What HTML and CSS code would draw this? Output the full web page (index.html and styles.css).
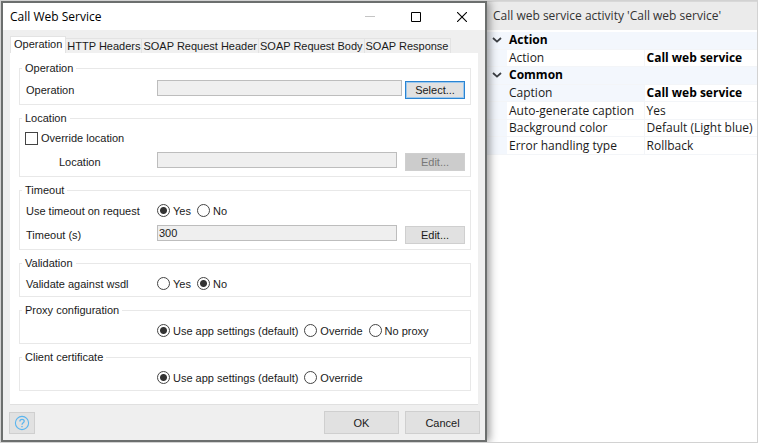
FILE: index.html
```html
<!DOCTYPE html>
<html lang="en">
<head>
<meta charset="utf-8">
<title>Call Web Service</title>
<link rel="stylesheet" href="styles.css">
</head>
<body>
<main class="dialog">
  <header class="titlebar">
    <h1 class="title">Call Web Service</h1>
    <button class="winbtn" aria-label="Minimize" disabled><svg width="10" height="10" viewBox="0 0 10 10"><path d="M0 4.5H10" stroke="#c4c4c4"/></svg></button>
    <button class="winbtn" aria-label="Maximize"><svg width="10" height="10" viewBox="0 0 10 10"><path d="M.5 .5H9.5V9.5H.5Z" fill="none" stroke="#000"/></svg></button>
    <button class="winbtn" aria-label="Close"><svg width="10" height="10" viewBox="0 0 10 10"><path d="M0 0L10 10M10 0L0 10" stroke="#000" stroke-width="1.1"/></svg></button>
  </header>
  <div class="client">
    <div class="tabs" role="tablist">
      <button class="tab active" role="tab" aria-selected="true">Operation</button>
      <button class="tab" role="tab">HTTP Headers</button>
      <button class="tab" role="tab">SOAP Request Header</button>
      <button class="tab" role="tab">SOAP Request Body</button>
      <button class="tab" role="tab">SOAP Response</button>
    </div>
    <form class="panel">
      <fieldset class="group">
        <legend>Operation</legend>
        <div class="row tight">
          <label for="operation">Operation</label>
          <input class="field" id="operation" type="text" readonly>
          <button class="btn focused" type="button">Select...</button>
        </div>
      </fieldset>
      <fieldset class="group">
        <legend>Location</legend>
        <label class="choices compact"><input type="checkbox">Override location</label>
        <div class="row">
          <label class="indent" for="location">Location</label>
          <input class="field" id="location" type="text" disabled>
          <button class="btn" type="button" disabled>Edit...</button>
        </div>
      </fieldset>
      <fieldset class="group">
        <legend>Timeout</legend>
        <div class="choices">
          <span class="name">Use timeout on request</span>
          <label><input type="radio" name="timeout" checked>Yes</label>
          <label><input type="radio" name="timeout">No</label>
        </div>
        <div class="row">
          <label for="seconds">Timeout (s)</label>
          <input class="field" id="seconds" type="text" value="300" readonly>
          <button class="btn" type="button">Edit...</button>
        </div>
      </fieldset>
      <fieldset class="group">
        <legend>Validation</legend>
        <div class="choices">
          <span class="name">Validate against wsdl</span>
          <label><input type="radio" name="validate">Yes</label>
          <label><input type="radio" name="validate" checked>No</label>
        </div>
      </fieldset>
      <fieldset class="group">
        <legend>Proxy configuration</legend>
        <div class="choices">
          <span class="name"></span>
          <label><input type="radio" name="proxy" checked>Use app settings (default)</label>
          <label><input type="radio" name="proxy">Override</label>
          <label><input type="radio" name="proxy">No proxy</label>
        </div>
      </fieldset>
      <fieldset class="group">
        <legend>Client certificate</legend>
        <div class="choices">
          <span class="name"></span>
          <label><input type="radio" name="cert" checked>Use app settings (default)</label>
          <label><input type="radio" name="cert">Override</label>
        </div>
      </fieldset>
    </form>
    <footer class="footer">
      <button class="btn help" aria-label="Help"><svg width="16" height="16" viewBox="0 0 16 16" fill="none" stroke="#5bb5ee"><circle cx="8" cy="8" r="6.6" stroke-width="1.1"/><path d="M5.9 6.4C5.9 3.6 10.2 3.7 10.2 6.2C10.2 7.8 8 7.8 8 9.7" stroke-width="1.3"/><path d="M8 10.9V12.3" stroke-width="1.4"/></svg></button>
      <button class="btn large">OK</button>
      <button class="btn large">Cancel</button>
    </footer>
  </div>
</main>
<aside class="props">
  <h2 class="props-title">Call web service activity 'Call web service'</h2>
  <table class="grid">
    <colgroup><col class="gutter"><col class="names"><col></colgroup>
    <tr class="cat"><td><svg width="10" height="6" viewBox="0 0 10 6"><path d="M1 1L5 4.6L9 1" fill="none" stroke="#3c3f44" stroke-width="1.8"/></svg></td><th colspan="2">Action</th></tr>
    <tr><td></td><td>Action</td><td class="changed">Call web service</td></tr>
    <tr class="cat"><td><svg width="10" height="6" viewBox="0 0 10 6"><path d="M1 1L5 4.6L9 1" fill="none" stroke="#3c3f44" stroke-width="1.8"/></svg></td><th colspan="2">Common</th></tr>
    <tr class="selected"><td></td><td>Caption</td><td class="changed">Call web service</td></tr>
    <tr><td></td><td>Auto-generate caption</td><td>Yes</td></tr>
    <tr><td></td><td>Background color</td><td>Default (Light blue)</td></tr>
    <tr><td></td><td>Error handling type</td><td>Rollback</td></tr>
  </table>
</aside>
</body>
</html>
```
FILE: styles.css
```css
* { box-sizing: border-box; }

body {
  margin: 0;
  min-height: 100vh;
  display: grid;
  grid-template-columns: minmax(0, 9fr) minmax(0, 5fr);
  border: 1px solid #d2d2d2;
  background: #fff;
  color: #1a1a1a;
  font: 11px/14px "Liberation Sans", Arial, sans-serif;
}

button, input { font: inherit; color: inherit; margin: 0; padding: 0; }

/* dialog window */
.dialog {
  display: flex;
  flex-direction: column;
  border: 2px solid #6c6f6e;
  box-shadow: 2px 0 9px rgba(0, 0, 0, 0.45);
  background: #efefef;
  z-index: 1;
}
.titlebar {
  display: flex;
  height: 27px;
  padding-left: 7px;
  align-items: center;
  background: #fff;
}
.title {
  flex: 1;
  margin: 0;
  font: 12px/16px "Open Sans", "Noto Sans", sans-serif;
  color: #000;
}
.winbtn {
  display: flex;
  width: 46px;
  height: 26px;
  align-items: center;
  justify-content: center;
  border: 0;
  background: none;
}

.client {
  flex: 1;
  display: flex;
  flex-direction: column;
  padding: 6px 7px;
}
.tabs { display: flex; align-items: flex-end; }
.tab {
  height: 15px;
  padding: 0 1px;
  border: 1px solid #e3e3e3;
  border-width: 1px 1px 0 0;
  background: #f0f0f0;
  white-space: nowrap;
}
.tab.active {
  height: 17px;
  padding: 0 3px 2px;
  border-left-width: 1px;
  background: #fff;
}
.panel {
  flex: 1;
  display: flex;
  flex-direction: column;
  gap: 6px;
  padding: 8px 7px 8px 9px;
  background: #fff;
  border-bottom: 1px solid #e0e0e0;
}

.group {
  min-width: 0;
  margin: 0;
  padding: 5px 5px 4px;
  border: 1px solid #e8e8e8;
}
.group legend { margin-left: -3px; padding: 0 3px; }
.row {
  display: grid;
  grid-template-columns: 132px 1fr 60px;
  height: 20px;
  align-items: center;
}
.choices + .row { margin-top: 6px; }
.row label, .name { padding-left: 1px; }
.row .indent { padding-left: 34px; }
.field {
  align-self: start;
  height: 16px;
  min-width: 0;
  margin-right: 8px;
  padding: 0 1px;
  border: 1px solid #bdbdbd;
  border-radius: 0;
  background: #efefef;
}
.tight .field { margin-right: 3px; }

.choices { display: flex; height: 17px; align-items: center; gap: 6px; }
.choices.compact { height: 16px; gap: 0; }
.name { flex: 0 0 126px; }
.choices label { display: flex; align-items: center; white-space: nowrap; }
input[type="radio"], input[type="checkbox"] {
  appearance: none;
  flex: none;
  width: 13px;
  height: 13px;
  margin-right: 3px;
  border: 1px solid #444;
  background: #fff;
}
input[type="radio"] { border-radius: 50%; }
input[type="radio"]:checked {
  background: radial-gradient(circle, #333 3px, #fff 4px);
}

.btn {
  height: 18px;
  border: 1px solid #cfcfcf;
  border-radius: 0;
  background: #e1e1e1;
  text-align: center;
}
.btn:disabled { background: #ccc; color: #777; }
.btn.focused { border-color: #2a84d2; box-shadow: inset 0 0 0 1px #9cc8ee; }

.footer {
  display: flex;
  gap: 6px;
  align-items: center;
  margin: 6px -2px 0 -1px;
}
.btn.large { width: 75px; height: 23px; }
.btn.help {
  display: flex;
  width: 26px;
  height: 22px;
  margin-right: auto;
  align-items: center;
  justify-content: center;
}

/* property grid */
.props {
  border-top: 1px solid #d8d8d8;
  font: 12px/16px "Open Sans", "Noto Sans", sans-serif;
}
.props-title {
  margin: 0;
  padding: 6px;
  background: #ebebeb;
  font: inherit;
  color: #333;
  white-space: nowrap;
}
.grid {
  width: 100%;
  height: 123px;
  table-layout: fixed;
  border-collapse: collapse;
  margin-top: 2px;
}
.gutter { width: 20px; }
.names { width: 137px; }
.grid td, .grid th {
  padding: 0 0 0 2px;
  border-bottom: 1px solid #f3f5f8;
  line-height: 16px;
  text-align: left;
  white-space: nowrap;
}
.grid td + td + td { border-left: 1px solid #f3f5f8; }
.grid td:first-child { padding-left: 5px; background: #f3f7fd; }
.grid svg { display: block; }
.cat th, .selected td:nth-child(2) { background: #f3f7fd; }
.cat th, .grid .changed { font-weight: bold; color: #000; }
```
